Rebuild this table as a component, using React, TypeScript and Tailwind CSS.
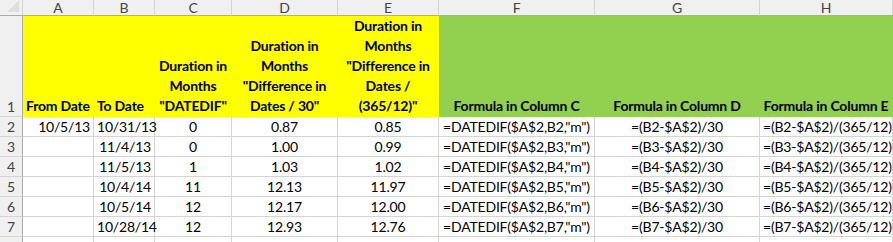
import React from 'react';

const COLS = ['A', 'B', 'C', 'D', 'E', 'F', 'G', 'H'];

const rows = [
  { r: 2, a: '10/5/13', b: '10/31/13', c: '0', d: '0.87', e: '0.85' },
  { r: 3, a: '', b: '11/4/13', c: '0', d: '1.00', e: '0.99' },
  { r: 4, a: '', b: '11/5/13', c: '1', d: '1.03', e: '1.02' },
  { r: 5, a: '', b: '10/4/14', c: '11', d: '12.13', e: '11.97' },
  { r: 6, a: '', b: '10/5/14', c: '12', d: '12.17', e: '12.00' },
  { r: 7, a: '', b: '10/28/14', c: '12', d: '12.93', e: '12.76' },
];

const cell = 'border-r border-b border-[#d4d4d4] px-[3px] leading-[19px] whitespace-nowrap';
const rowHead = 'bg-[#f0f0f0] border-r border-r-[#ababab] border-b border-b-[#d4d4d4] flex items-end justify-center text-[#444] leading-[19px]';
const yellow = 'bg-[#ffff00] border-r border-b border-[#ffff00] font-bold flex items-end px-[3px] leading-[20px] whitespace-nowrap';
const green = 'bg-[#92d050] border-r border-b border-[#92d050] font-bold flex items-end justify-center leading-[20px] whitespace-nowrap';

export default function App() {
  return (
    <div
      className="w-[893px] h-[242px] overflow-hidden bg-white text-black text-[14px] tracking-[-0.2px]"
      style={{ fontFamily: 'Lato, "Open Sans", sans-serif' }}
    >
      <div className="grid grid-cols-[23px_71px_61px_77px_106px_101px_156px_165px_133px] grid-rows-[16px_101px_repeat(7,20px)]">
        {/* column headers */}
        <div className="relative bg-[#f0f0f0] border-r border-[#d4d4d4] border-b border-b-[#ababab]">
          <div className="absolute right-[3px] bottom-[3px] w-0 h-0 border-l-[12px] border-l-transparent border-b-[12px] border-b-[#dfdfdf]" />
        </div>
        {COLS.map((c) => (
          <div
            key={c}
            className="bg-[#f0f0f0] border-r border-[#d4d4d4] border-b border-b-[#ababab] flex items-center justify-center text-[#444] leading-[15px]"
          >
            {c}
          </div>
        ))}

        {/* row 1 */}
        <div className={rowHead}>1</div>
        <div className={yellow}>From Date</div>
        <div className={yellow}>To Date</div>
        <div className={`${yellow} justify-center text-center`}>
          <span>Duration in<br />Months<br />"DATEDIF"</span>
        </div>
        <div className={`${yellow} justify-center text-center`}>
          <span>Duration in<br />Months<br />"Difference in<br />Dates / 30"</span>
        </div>
        <div className={`${yellow} justify-center text-center`}>
          <span>Duration in<br />Months<br />"Difference in<br />Dates /<br />(365/12)"</span>
        </div>
        <div className={green}>Formula in Column C</div>
        <div className={green}>Formula in Column D</div>
        <div className={green}>Formula in Column E</div>

        {/* data rows */}
        {rows.map((row) => (
          <React.Fragment key={row.r}>
            <div className={`${rowHead} items-center`}>{row.r}</div>
            <div className={`${cell} text-right`}>{row.a}</div>
            <div className={`${cell} text-right`}>{row.b}</div>
            <div className={`${cell} text-center`}>{row.c}</div>
            <div className={`${cell} text-center`}>{row.d}</div>
            <div className={`${cell} text-center`}>{row.e}</div>
            <div className={`${cell} text-center px-0`}>=DATEDIF($A$2,B{row.r},"m")</div>
            <div className={`${cell} text-center`}>=(B{row.r}-$A$2)/30</div>
            <div className={`${cell} text-center px-0`}>=(B{row.r}-$A$2)/(365/12)</div>
          </React.Fragment>
        ))}

        {/* row 8, only its top edge shows */}
        <div className={rowHead} />
        {COLS.map((c) => (
          <div key={c} className={cell} />
        ))}
      </div>
    </div>
  );
}
